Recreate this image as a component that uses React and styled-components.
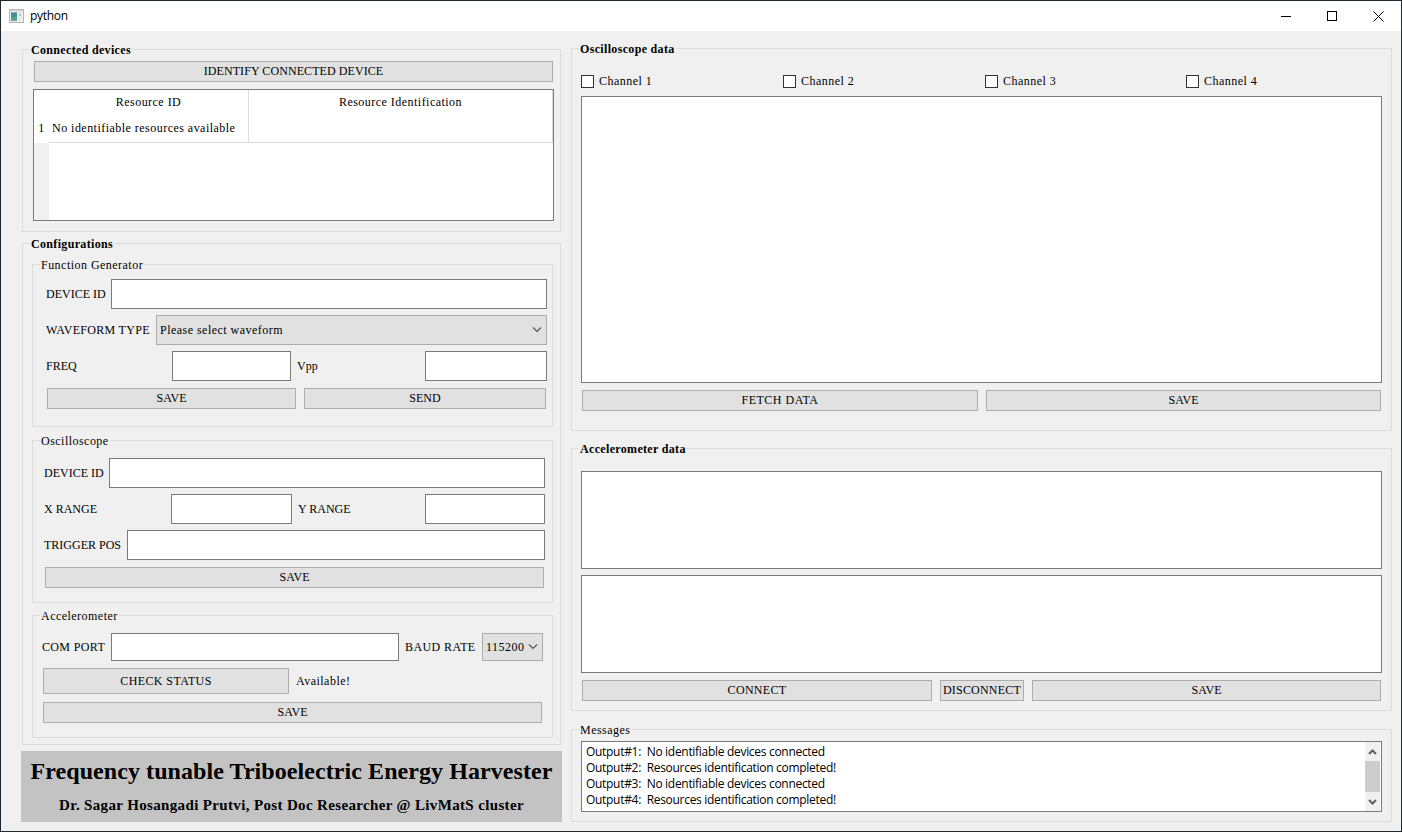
import React from "react";
import styled, { createGlobalStyle } from "styled-components";

const GlobalStyle = createGlobalStyle`
	html, body {
		margin: 0;
		padding: 0;
		background: #f0f0f0;
	}
	* {
		box-sizing: border-box;
	}
`;

// the reference has hinted Times, lowercase runs wider than Liberation Serif, hence the letter spacing
const Win = styled.div`
	width: 1402px;
	height: 832px;
	border: 1px solid #1e2a31;
	background: #f0f0f0;
	font-family: "Liberation Serif", "Times New Roman", serif;
	font-size: 12px;
	letter-spacing: 0.47px;
	color: #000;
	overflow: hidden;
`;

const TitleBar = styled.div`
	height: 30px;
	background: #fff;
	display: flex;
	align-items: center;
	padding-left: 8px;
	font-family: "Open Sans", "Noto Sans", sans-serif;
	font-size: 12px;
	letter-spacing: -0.3px;
`;

const AppName = styled.span`
	margin-left: 6px;
	padding-bottom: 1px;
	flex: 1;
`;

const WinButton = styled.div`
	width: 46px;
	height: 30px;
	display: flex;
	align-items: center;
	justify-content: center;
`;

const Body = styled.div`
	display: flex;
	gap: 9px;
	padding: 18px 9px 0 20px;
`;

const LeftColumn = styled.div`
	width: 541px;
	display: flex;
	flex-direction: column;
	align-items: center;
`;

const RightColumn = styled.div`
	width: 821px;
	display: flex;
	flex-direction: column;
`;

const Group = styled.section`
	position: relative;
	width: ${(p) => (p.$w ? `${p.$w}px` : "100%")};
	height: ${(p) => p.$h}px;
	margin-top: ${(p) => p.$top || 0}px;
	padding: ${(p) => p.$pad || "0"};
	border: 1px solid #dcdcdc;
`;

const GroupTitle = styled.h3`
	position: absolute;
	top: -7px;
	left: 7px;
	margin: 0;
	padding: 0 1px;
	background: #f0f0f0;
	font-size: 12px;
	line-height: 14px;
	font-weight: ${(p) => (p.$plain ? 400 : 700)};
	letter-spacing: ${(p) => (p.$plain ? 0.47 : 0.33)}px;
`;

const Row = styled.div`
	display: flex;
	align-items: center;
	height: ${(p) => p.$h || 30}px;
	margin-top: ${(p) => p.$top || 0}px;
	padding-left: ${(p) => p.$left || 0}px;
`;

const Label = styled.label`
	width: ${(p) => p.$w}px;
	flex: none;
	padding-left: ${(p) => p.$inset || 0}px;
	white-space: nowrap;
	letter-spacing: ${(p) => p.$sp ?? 0.1}px;
`;

const Input = styled.div`
	width: ${(p) => p.$w}px;
	height: 100%;
	flex: none;
	background: #fff;
	border: 1px solid #7a7a7a;
`;

const Button = styled.button`
	display: block;
	width: ${(p) => p.$w}px;
	height: 100%;
	flex: none;
	margin: 0 0 0 ${(p) => p.$gap || 0}px;
	padding: 0;
	background: #e1e1e1;
	border: 1px solid #adadad;
	font: inherit;
	letter-spacing: ${(p) => p.$sp ?? 0.1}px;
	color: #000;
`;

const Combo = styled.div`
	width: ${(p) => p.$w}px;
	height: 100%;
	flex: none;
	display: flex;
	align-items: center;
	justify-content: space-between;
	padding: 0 4px 0 3px;
	background: #e1e1e1;
	border: 1px solid #adadad;
`;

const DeviceTable = styled.div`
	display: grid;
	grid-template-columns: 15px 200px 304px;
	grid-template-rows: 26px 27px 1fr;
	width: 521px;
	height: 132px;
	margin-top: 7px;
	background: #fff;
	border: 1px solid #7a7a7a;
`;

const HeaderCell = styled.div`
	display: flex;
	align-items: center;
	justify-content: center;
	padding-bottom: 2px;
	border-right: 1px solid #dcdcdc;
`;

const Corner = styled.div`
	background: #fff;
`;

const RowNumber = styled.div`
	display: flex;
	align-items: center;
	justify-content: center;
	padding-bottom: 2px;
`;

const Cell = styled.div`
	display: flex;
	align-items: center;
	padding: 0 0 2px 3px;
	border-right: 1px solid #dcdcdc;
	border-bottom: 1px solid #dcdcdc;
`;

const RowGutter = styled.div`
	background: #f0f0f0;
`;

const Filler = styled.div`
	grid-column: span 2;
`;

const ChannelRow = styled.div`
	display: grid;
	grid-template-columns: 202px 202px 201px 1fr;
	height: 14px;
	margin-top: 25px;
	padding-left: 9px;
`;

const Channel = styled.label`
	display: flex;
	align-items: center;
	gap: 5px;
`;

const CheckBox = styled.span`
	width: 13px;
	height: 13px;
	background: #fff;
	border: 1px solid #333;
`;

const Plot = styled.div`
	width: 801px;
	height: ${(p) => p.$h}px;
	margin: ${(p) => p.$top}px 0 0 9px;
	background: #fff;
	border: 1px solid #7a7a7a;
`;

const Banner = styled.div`
	width: 541px;
	height: 71px;
	margin-top: 6px;
	background: #c3c3c3;
	font-weight: 700;
	text-align: center;
`;

const BannerTitle = styled.div`
	font-size: 24px;
	line-height: 28px;
	padding-top: 6px;
	letter-spacing: 0.07px;
	white-space: nowrap;
`;

const BannerSub = styled.div`
	font-size: 15px;
	line-height: 18px;
	margin-top: 11px;
	letter-spacing: 0.35px;
	white-space: nowrap;
`;

const LogBox = styled.div`
	display: flex;
	width: 801px;
	height: 71px;
	margin: 11px 0 0 9px;
	background: #fff;
	border: 1px solid #7a7a7a;
`;

const LogLines = styled.div`
	flex: 1;
	padding: 2px 0 0 4px;
	font-family: "Open Sans", "Noto Sans", sans-serif;
	font-size: 12px;
	line-height: 16px;
	letter-spacing: -0.3px;
	white-space: pre;
`;

const ScrollBar = styled.div`
	width: 15px;
	margin-right: 1px;
	display: flex;
	flex-direction: column;
	background: #f0f0f0;
`;

const ScrollArrow = styled.div`
	height: 19px;
	display: flex;
	align-items: center;
	justify-content: center;
`;

const ScrollThumb = styled.div`
	flex: 1;
	background: #cdcdcd;
`;

const Chevron = () => (
	<svg width="10" height="6" viewBox="0 0 10 6" fill="none">
		<path d="M1 0.5 L5 4.5 L9 0.5" stroke="#555" strokeWidth="1.2" />
	</svg>
);

const ScrollChevron = ({ up }) => (
	<svg width="9" height="6" viewBox="0 0 9 6" fill="none">
		<path d={up ? "M1 5 L4.5 1.5 L8 5" : "M1 1 L4.5 4.5 L8 1"} stroke="#606060" strokeWidth="2" />
	</svg>
);

const AppIcon = () => (
	<svg width="15" height="14" viewBox="0 0 15 14">
		<defs>
			<linearGradient id="iconFill" x1="0" y1="0" x2="0" y2="1">
				<stop offset="0" stopColor="#3f7f9a" />
				<stop offset="1" stopColor="#5fae92" />
			</linearGradient>
		</defs>
		<rect x="0.5" y="0.5" width="14" height="13" fill="#efefef" stroke="#b4b4b4" />
		<rect x="1" y="1" width="13" height="1.5" fill="#d8d8d8" />
		<rect x="2" y="3.5" width="6" height="8.5" fill="url(#iconFill)" />
		<rect x="9" y="3.5" width="4" height="8.5" fill="#e4ece6" />
		<rect x="10" y="5" width="2" height="2" fill="#a9c9b4" />
	</svg>
);

const channels = ["Channel 1", "Channel 2", "Channel 3", "Channel 4"];

function App() {
	return (
		<Win>
			<GlobalStyle />
			<TitleBar>
				<AppIcon />
				<AppName>python</AppName>
				<WinButton>
					<svg width="10" height="10" viewBox="0 0 10 10">
						<path d="M0 5.5 H10" stroke="#000" strokeWidth="1" />
					</svg>
				</WinButton>
				<WinButton>
					<svg width="10" height="10" viewBox="0 0 10 10" fill="none">
						<rect x="0.5" y="0.5" width="9" height="9" stroke="#000" strokeWidth="1" />
					</svg>
				</WinButton>
				<WinButton>
					<svg width="11" height="11" viewBox="0 0 11 11" fill="none">
						<path d="M0.5 0.5 L10.5 10.5 M10.5 0.5 L0.5 10.5" stroke="#000" strokeWidth="1" />
					</svg>
				</WinButton>
			</TitleBar>
			<Body>
				<LeftColumn>
					<Group $w={539} $h={183} $pad="11px 0 0 10px">
						<GroupTitle>Connected devices</GroupTitle>
						<Row $h={21} $left={1}>
							<Button $w={519} $sp={0.08}>IDENTIFY CONNECTED DEVICE</Button>
						</Row>
						<DeviceTable>
							<Corner />
							<HeaderCell>Resource ID</HeaderCell>
							<HeaderCell>Resource Identification</HeaderCell>
							<RowNumber>1</RowNumber>
							<Cell>No identifiable resources available</Cell>
							<Cell />
							<RowGutter />
							<Filler />
						</DeviceTable>
					</Group>

					<Group $w={539} $h={502} $top={11} $pad="20px 0 0 9px">
						<GroupTitle>Configurations</GroupTitle>

						<Group $w={521} $h={163} $pad="14px 0 0 13px">
							<GroupTitle $plain>Function Generator</GroupTitle>
							<Row>
								<Label $w={65} $sp={0}>DEVICE ID</Label>
								<Input $w={436} />
							</Row>
							<Row $top={6}>
								<Label $w={110} $sp={0.3}>WAVEFORM TYPE</Label>
								<Combo $w={391}>
									Please select waveform
									<Chevron />
								</Combo>
							</Row>
							<Row $top={6}>
								<Label $w={126} $sp={0}>FREQ</Label>
								<Input $w={119} />
								<Label $w={134} $inset={6}>Vpp</Label>
								<Input $w={122} />
							</Row>
							<Row $h={21} $top={7} $left={1}>
								<Button $w={249}>SAVE</Button>
								<Button $w={242} $gap={8}>SEND</Button>
							</Row>
						</Group>

						<Group $w={521} $h={163} $top={13} $pad="17px 0 0 11px">
							<GroupTitle $plain>Oscilloscope</GroupTitle>
							<Row>
								<Label $w={65} $sp={0}>DEVICE ID</Label>
								<Input $w={436} />
							</Row>
							<Row $top={6}>
								<Label $w={127} $sp={0}>X RANGE</Label>
								<Input $w={121} />
								<Label $w={133} $inset={6} $sp={0}>Y RANGE</Label>
								<Input $w={120} />
							</Row>
							<Row $top={6}>
								<Label $w={83} $sp={0}>TRIGGER POS</Label>
								<Input $w={418} />
							</Row>
							<Row $h={21} $top={7} $left={1}>
								<Button $w={499}>SAVE</Button>
							</Row>
						</Group>

						<Group $w={521} $h={123} $top={12} $pad="17px 0 0 9px">
							<GroupTitle $plain>Accelerometer</GroupTitle>
							<Row $h={28}>
								<Label $w={69} $sp={0.35}>COM PORT</Label>
								<Input $w={288} />
								<Label $w={83} $inset={6} $sp={0.4}>BAUD RATE</Label>
								<Combo $w={61}>
									115200
									<Chevron />
								</Combo>
							</Row>
							<Row $h={26} $top={7} $left={1}>
								<Button $w={246} $sp={0.4}>CHECK STATUS</Button>
								<Label $w={60} $inset={7} $sp={0.47}>Available!</Label>
							</Row>
							<Row $h={21} $top={8} $left={1}>
								<Button $w={499}>SAVE</Button>
							</Row>
						</Group>
					</Group>

					<Banner>
						<BannerTitle>Frequency tunable Triboelectric Energy Harvester</BannerTitle>
						<BannerSub>Dr. Sagar Hosangadi Prutvi, Post Doc Researcher @ LivMatS cluster</BannerSub>
					</Banner>
				</LeftColumn>

				<RightColumn>
					<Group $h={383} style={{ marginTop: -1 }}>
						<GroupTitle>Oscilloscope data</GroupTitle>
						<ChannelRow>
							{channels.map((name) => (
								<Channel key={name}>
									<CheckBox />
									{name}
								</Channel>
							))}
						</ChannelRow>
						<Plot $h={287} $top={8} />
						<Row $h={21} $top={7} $left={10}>
							<Button $w={396} $sp={0.5}>FETCH DATA</Button>
							<Button $w={395} $gap={8}>SAVE</Button>
						</Row>
					</Group>

					<Group $h={263} $top={17}>
						<GroupTitle>Accelerometer data</GroupTitle>
						<Plot $h={98} $top={22} />
						<Plot $h={98} $top={6} />
						<Row $h={21} $top={7} $left={10}>
							<Button $w={350} $sp={0.3}>CONNECT</Button>
							<Button $w={84} $gap={8} $sp={0.2}>DISCONNECT</Button>
							<Button $w={349} $gap={8}>SAVE</Button>
						</Row>
					</Group>

					<Group $h={93} $top={18}>
						<GroupTitle $plain>Messages</GroupTitle>
						<LogBox>
							<LogLines>
								{"Output#1:  No identifiable devices connected\nOutput#2:  Resources identification completed!\nOutput#3:  No identifiable devices connected\nOutput#4:  Resources identification completed!"}
							</LogLines>
							<ScrollBar>
								<ScrollArrow><ScrollChevron up /></ScrollArrow>
								<ScrollThumb />
								<ScrollArrow><ScrollChevron /></ScrollArrow>
							</ScrollBar>
						</LogBox>
					</Group>
				</RightColumn>
			</Body>
		</Win>
	);
}

export default App;
